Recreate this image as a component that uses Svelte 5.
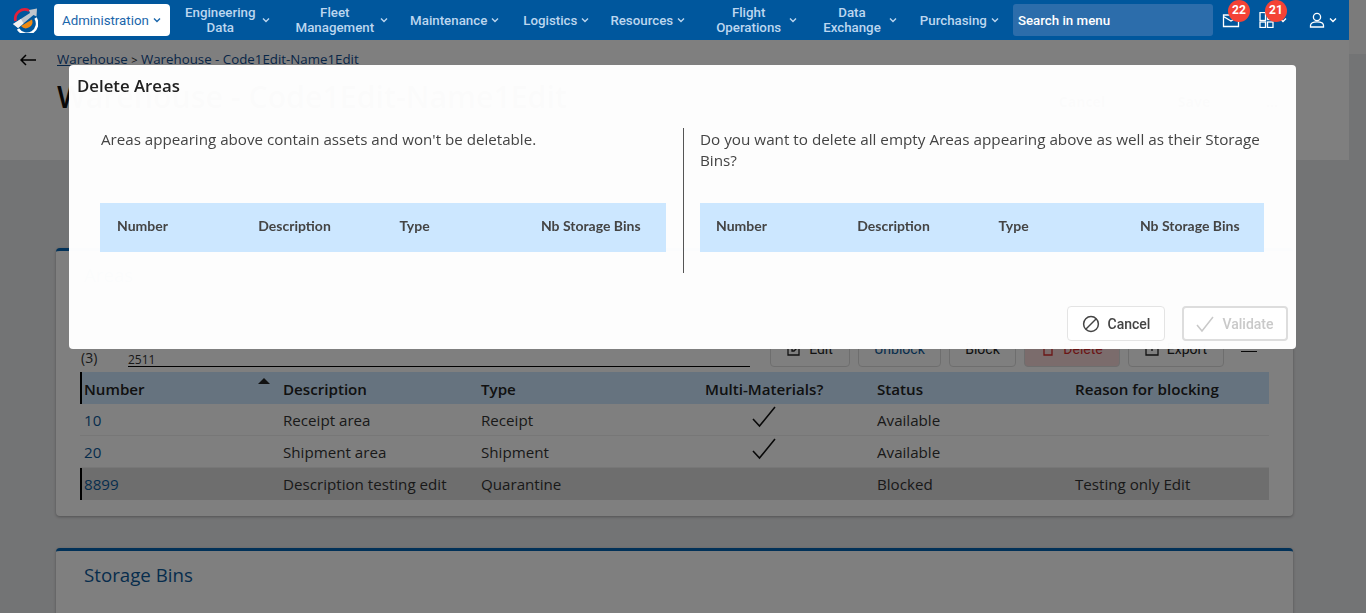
<script>
  const menu = [
    { label: 'Engineering Data', kind: 'two push' },
    { label: 'Fleet Management', kind: 'two tight' },
    { label: 'Maintenance', kind: '' },
    { label: 'Logistics', kind: 'narrow' },
    { label: 'Resources', kind: 'loose' },
    { label: 'Flight Operations', kind: 'wide push' },
    { label: 'Data Exchange', kind: 'wide nudge' },
    { label: 'Purchasing', kind: '' }
  ];

  const areas = [
    { number: '10', description: 'Receipt area', type: 'Receipt', multi: true, status: 'Available', reason: '' },
    { number: '20', description: 'Shipment area', type: 'Shipment', multi: true, status: 'Available', reason: '' },
    { number: '8899', description: 'Description testing edit', type: 'Quarantine', multi: false, status: 'Blocked', reason: 'Testing only Edit', selected: true }
  ];

  const modalColumns = ['Number', 'Description', 'Type', 'Nb Storage Bins'];
</script>

{#snippet chevron()}
  <svg class="chevron" viewBox="0 0 8 6" width="8" height="6"><path d="M1 1.5 L4 4.5 L7 1.5" /></svg>
{/snippet}

{#snippet modalTable()}
  <div class="modal-table">
    {#each modalColumns as column}
      <span>{column}</span>
    {/each}
  </div>
{/snippet}

<div class="shell">
  <div class="page">
    <nav class="navbar">
      <svg class="logo" viewBox="0 0 26 26" width="26" height="26">
        <path d="M3.5 14 A9.5 9.5 0 0 1 17 3.5" fill="none" stroke="#e3203a" stroke-width="2.8" />
        <path d="M6 22 A10 10 0 0 0 23.5 11" fill="none" stroke="#fff" stroke-width="2.6" />
        <path d="M9 19 A6.5 6.5 0 0 0 20 12.5 Z" fill="#f08a12" />
        <path d="M1 17 L18 6 L17 3 L25 1.5 L24.5 9.5 L21.5 8 L6 21 Z" fill="#bfc5cc" />
        <path d="M1 17 L9 12 L11.5 16.5 L6 21 Z" fill="#f2f2f2" />
      </svg>

      <a class="nav-item active">Administration {@render chevron()}</a>
      {#each menu as item}
        <a class="nav-item {item.kind}">
          <span class="nav-label">{item.label}</span>
          {@render chevron()}
        </a>
      {/each}

      <div class="nav-search">Search in menu</div>

      <div class="nav-icon mail">
        <svg viewBox="0 0 18 16" width="18" height="16"><path d="M1.5 4.5 L9 9 L16.5 4.5 M1.5 3 H16.5 V14.5 H1.5 Z" /></svg>
        <span class="badge">22</span>
      </div>
      <div class="nav-icon apps">
        <svg viewBox="0 0 16 16" width="16" height="16">
          <rect x="1" y="0.5" width="5.5" height="8" /><rect x="1" y="10" width="5.5" height="5.5" /><rect x="8.5" y="10" width="5.5" height="5.5" /><rect x="8.5" y="1" width="5.5" height="6.5" />
        </svg>
        <span class="badge">21</span>
        {@render chevron()}
      </div>
      <div class="nav-icon user">
        <svg viewBox="0 0 16 16" width="16" height="16"><circle cx="8" cy="5" r="3.6" /><path d="M1.5 15 V13.5 C1.5 11 4 9.8 8 9.8 C12 9.8 14.5 11 14.5 13.5 V15 Z" /></svg>
        {@render chevron()}
      </div>
    </nav>

    <header class="head">
      <svg class="back" viewBox="0 0 16 12" width="16" height="12"><path d="M16 6 H1 M6 1 L1 6 L6 11" /></svg>
      <div class="head-text">
        <div class="crumbs"><u>Warehouse</u> <small>&gt;</small> Warehouse - Code1Edit-Name1Edit</div>
        <h1>Warehouse - Code1Edit-Name1Edit</h1>
      </div>
      <div class="head-actions">
        <span class="ghost">Cancel</span>
        <span class="ghost">Save</span>
        <span class="ghost round">...</span>
      </div>
    </header>

    <main class="content">
      <section class="card">
        <h2>Areas</h2>
        <div class="toolbar">
          <span class="count">(3)</span>
          <div class="filter">2511</div>
          <div class="actions">
            <button class="edit">
              <svg viewBox="0 0 14 14" width="14" height="14"><path d="M7 2 H1 V13 H12 V7 M5 9 V7 L11 1 L13 3 L7 9 Z" /></svg>
              Edit
            </button>
            <button class="unblock">Unblock</button>
            <button class="block">Block</button>
            <button class="delete">
              <svg viewBox="0 0 14 14" width="14" height="14"><path d="M2 3 H12 M3 3 V13 H11 V3" /></svg>
              Delete
            </button>
            <button class="export">
              <svg viewBox="0 0 14 14" width="14" height="14"><path d="M4 1 H1 V13 H13 V1 H10 M7 9 V2" /></svg>
              Export
            </button>
            <div class="burger"></div>
          </div>
        </div>

        <div class="table">
          <div class="row thead">
            <span>Number<i class="sort"></i></span>
            <span>Description</span>
            <span>Type</span>
            <span>Multi-Materials?</span>
            <span>Status</span>
            <span>Reason for blocking</span>
          </div>
          {#each areas as area}
            <div class="row" class:selected={area.selected}>
              <span class="link">{area.number}</span>
              <span>{area.description}</span>
              <span>{area.type}</span>
              <span class="multi">
                {#if area.multi}
                  <svg viewBox="0 0 24 22" width="24" height="22"><path d="M1 13 L7.5 20 L23 1" /></svg>
                {/if}
              </span>
              <span>{area.status}</span>
              <span>{area.reason}</span>
            </div>
          {/each}
        </div>
      </section>

      <section class="card">
        <h2>Storage Bins</h2>
      </section>
    </main>
  </div>
  <div class="strip"><div class="strip-top"></div></div>
</div>

<div class="overlay"></div>

<div class="modal">
  <h3>Delete Areas</h3>
  <div class="modal-body">
    <div class="panel left">
      <p>Areas appearing above contain assets and won't be deletable.</p>
      {@render modalTable()}
    </div>
    <div class="panel right">
      <p>Do you want to delete all empty Areas appearing above as well as their Storage Bins?</p>
      {@render modalTable()}
    </div>
  </div>
  <div class="modal-footer">
    <button class="modal-btn">
      <svg viewBox="0 0 18 18" width="18" height="18"><circle cx="9" cy="9" r="7.4" /><path d="M4 14 L14 4" /></svg>
      Cancel
    </button>
    <button class="modal-btn disabled">
      <svg viewBox="0 0 18 18" width="18" height="18"><path d="M1 10 L6 16 L17 2" /></svg>
      Validate
    </button>
  </div>
</div>

<style>
  :global(body) {
    margin: 0;
    height: 613px;
    overflow: hidden;
    background: #e7e8ea;
    font-family: "Open Sans", "Noto Sans", sans-serif;
    color: #333;
  }

  .shell {
    display: flex;
    height: 613px;
    overflow: hidden;
  }

  .page {
    width: 1349px;
    flex: none;
  }

  .strip {
    flex: 1;
  }

  .strip-top {
    height: 54px;
    background: #f6f6f6;
  }

  /* nav stays above the backdrop */
  .navbar {
    position: relative;
    z-index: 3;
    height: 40px;
    display: flex;
    align-items: center;
    background: #00579d;
    font-family: Roboto, "Liberation Sans", sans-serif;
    font-size: 13.3px;
    font-weight: 500;
    color: #bcd6ef;
  }

  .logo {
    margin: 0 16px 0 12px;
    flex: none;
  }

  .nav-item {
    height: 32px;
    padding: 0 12px;
    display: flex;
    align-items: center;
    gap: 4px;
    line-height: 15px;
    text-align: center;
    flex: none;
    box-sizing: border-box;
  }

  .nav-item.two {
    gap: 6px;
  }

  .nav-item.wide {
    gap: 8px;
  }

  .nav-item.push {
    margin-right: 2px;
  }

  .nav-item.tight {
    margin-right: -2px;
  }

  .nav-item.nudge {
    margin-right: -1px;
  }

  .nav-item.narrow {
    margin-right: -3px;
  }

  .nav-item.loose {
    margin-right: 7px;
  }

  .nav-label {
    width: min-content;
  }

  .nav-item.active {
    width: 116px;
    margin-right: 3px;
    padding: 0 0 0 8px;
    background: #fff;
    border-radius: 4px;
    color: #1a66ab;
    font-weight: 400;
  }

  .chevron {
    flex: none;
    fill: none;
    stroke: currentColor;
    stroke-width: 1.4;
  }

  .nav-search {
    width: 200px;
    height: 32px;
    margin-left: 2px;
    padding-left: 5px;
    box-sizing: border-box;
    display: flex;
    align-items: center;
    background: #2c6dab;
    border-radius: 3px;
    color: #fff;
    flex: none;
  }

  .nav-icon {
    position: relative;
    display: flex;
    align-items: center;
    gap: 4px;
    color: #fff;
  }

  .nav-icon svg:first-child {
    fill: none;
    stroke: #fff;
    stroke-width: 1.3;
  }

  .mail {
    margin-left: 9px;
  }

  .apps {
    margin-left: 19px;
  }

  .user {
    margin-left: 22px;
  }

  .badge {
    position: absolute;
    top: -12px;
    left: 6px;
    width: 22px;
    height: 22px;
    border-radius: 50%;
    background: #f44336;
    color: #fff;
    font-size: 12px;
    font-weight: 700;
    line-height: 20px;
    text-align: center;
  }

  .head {
    height: 120px;
    display: flex;
    background: #fff;
    box-sizing: border-box;
    padding: 11px 57px 0 20px;
  }

  .back {
    margin-top: 3px;
    flex: none;
    fill: none;
    stroke: #000;
    stroke-width: 1.5;
  }

  .head-text {
    margin-left: 21px;
    flex: 1;
  }

  .crumbs {
    font-size: 13.3px;
    line-height: 16px;
    color: #0f4c8f;
  }

  .crumbs small {
    color: #222;
  }

  h1 {
    margin: 9px 0 0;
    font-size: 30.3px;
    line-height: 40px;
    font-weight: 600;
    color: #111;
  }

  .head-actions {
    display: flex;
    gap: 10px;
    margin: 32px -1px 0 0;
  }

  .ghost {
    width: 100px;
    height: 36px;
    border: 1px solid #ddd;
    border-radius: 4px;
    text-align: center;
    line-height: 36px;
    font-weight: 700;
    font-size: 14px;
  }

  .ghost.round {
    width: 40px;
    height: 40px;
    border-radius: 50%;
    margin-left: -4px;
  }

  .content {
    padding: 88px 56px 0;
    display: flex;
    flex-direction: column;
    gap: 32px;
  }

  .card {
    height: 268px;
    flex: none;
    box-sizing: border-box;
    padding: 0 24px;
    background: #fff;
    border-top: 3px solid #0262b0;
    border-radius: 4px;
    box-shadow: 0 1px 3px rgba(0, 0, 0, 0.3);
  }

  h2 {
    margin: 12px 4px 0;
    font-size: 18.7px;
    line-height: 24px;
    font-weight: 400;
    color: #0d5a9a;
  }

  .toolbar {
    display: flex;
    align-items: flex-end;
    margin-top: 45px;
    height: 35px;
    font-size: 14px;
  }

  .count {
    margin-left: 1px;
    width: 47px;
    line-height: 18px;
  }

  .filter {
    width: 622px;
    border-bottom: 1px solid #000;
    font-size: 12px;
    line-height: 13px;
  }

  .actions {
    display: flex;
    align-items: center;
    gap: 8px;
    margin-left: 20px;
  }

  .actions button {
    height: 35px;
    display: flex;
    align-items: center;
    justify-content: center;
    gap: 8px;
    padding: 0 0 2px;
    border: 1px solid #ddd;
    border-radius: 4px;
    background: #fff;
    font: 14px Roboto, sans-serif;
    color: #222;
  }

  .actions svg {
    fill: none;
    stroke: currentColor;
    stroke-width: 1.3;
  }

  .edit {
    width: 80px;
  }

  .unblock {
    width: 83px;
    color: #0d5a9a !important;
  }

  .block {
    width: 67px;
  }

  .delete {
    width: 96px;
    background: #f6d9d9 !important;
    color: #d62b2b !important;
  }

  .export {
    width: 96px;
  }

  .burger {
    width: 16px;
    height: 1.5px;
    margin: 4px 0 0 9px;
    background: #111;
  }

  .table {
    margin-top: 5px;
  }

  .row {
    height: 32px;
    box-sizing: border-box;
    display: grid;
    grid-template-columns: 199px 198px 224px 172px 198px 1fr;
    align-items: center;
    padding: 1px 0 0 4px;
    border-bottom: 1px solid #eee;
    font-size: 15.15px;
  }

  .thead {
    background: #cce7ff;
    border-left: 2px solid #000;
    padding-left: 2px;
    border-bottom: none;
    font-weight: 600;
    color: #222;
  }

  .thead span {
    position: relative;
  }

  .sort {
    position: absolute;
    right: 13px;
    top: -1px;
    border: 6px solid transparent;
    border-top: none;
    border-bottom-color: #222;
  }

  .selected {
    background: #dcdcdc;
    border-left: 2px solid #000;
    padding: 0 0 0 2px;
    border-bottom: none;
  }

  .link {
    color: #0d5a9a;
  }

  .multi {
    align-self: start;
    padding-left: 47px;
    height: 22px;
    margin-top: 1px;
  }

  .multi svg {
    fill: none;
    stroke: #111;
    stroke-width: 1.6;
  }

  .overlay {
    position: fixed;
    inset: 0;
    z-index: 2;
    background: rgba(0, 0, 0, 0.5);
  }

  .modal {
    position: fixed;
    z-index: 4;
    top: 65px;
    left: 69px;
    width: 1227px;
    height: 284px;
    box-sizing: border-box;
    background: rgba(255, 255, 255, 0.985);
    border-radius: 4px;
    display: flex;
    flex-direction: column;
  }

  h3 {
    margin: 10px 8px 0;
    font-size: 16.8px;
    line-height: 22px;
    font-weight: 600;
    color: #222;
  }

  .modal-body {
    margin-top: 31px;
    padding-left: 32px;
    display: flex;
  }

  .panel {
    height: 145px;
    box-sizing: border-box;
    width: 566px;
  }

  .panel.left {
    width: 583px;
    padding-right: 17px;
    border-right: 1px solid #555;
  }

  .panel.right {
    width: 580px;
    padding-left: 16px;
  }

  .panel p {
    margin: 1px 0 0;
    height: 74px;
    font-size: 15.15px;
    line-height: 21px;
    color: #444;
  }

  .right p {
    font-size: 15.25px;
  }

  .modal-table {
    height: 49px;
    display: grid;
    grid-template-columns: repeat(4, 141.3px);
    align-items: center;
    padding: 0 0 4px 16px;
    box-sizing: border-box;
    overflow: hidden;
    background: #cce7ff;
    font-family: Lato, sans-serif;
    font-size: 14px;
    font-weight: 700;
    color: #444;
  }

  .left .modal-table {
    margin-left: -1px;
    padding-left: 17px;
  }

  .modal-footer {
    margin-top: 33px;
    padding-right: 8px;
    display: flex;
    justify-content: flex-end;
    gap: 17px;
  }

  .modal-btn {
    width: 98px;
    height: 35px;
    display: flex;
    align-items: center;
    justify-content: center;
    gap: 8px;
    padding: 0;
    border: 1px solid #e4e4e4;
    border-radius: 4px;
    background: #fff;
    font: 500 14px Roboto, sans-serif;
    color: #444;
  }

  .modal-btn svg {
    fill: none;
    stroke: currentColor;
    stroke-width: 1.5;
  }

  .modal-btn.disabled {
    width: 106px;
    border: 2px solid #ddd;
    color: #c9c9c9;
  }
</style>
